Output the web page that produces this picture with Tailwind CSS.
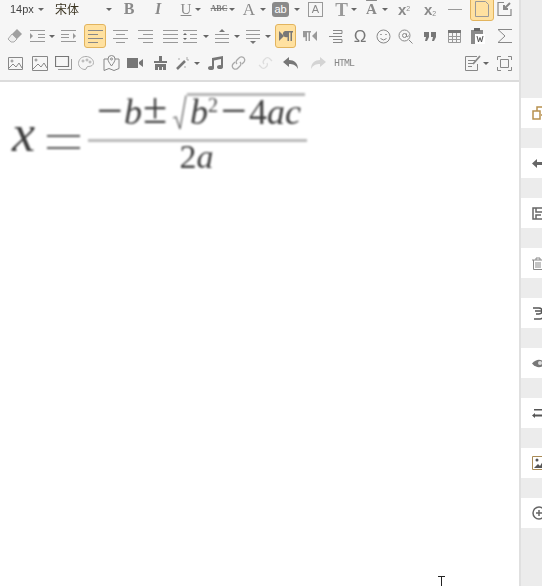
<!DOCTYPE html>
<html lang="en">
<head>
<meta charset="UTF-8">
<title>Editor formula</title>
<script src="https://cdn.jsdelivr.net/npm/@tailwindcss/browser@4"></script>
</head>
<body class="bg-white overflow-hidden">
<div class="relative flex w-[542px] h-[586px] overflow-hidden font-['Liberation_Sans',sans-serif]">
  <!-- editor column -->
  <div class="w-[519px] shrink-0 flex flex-col">
    <div class="h-[85px] shrink-0 bg-[#f6f6f6] border-b-2 border-[#dcdcdc] flex flex-col gap-[3px] -mt-[3px] pt-0 overflow-hidden">
      <!-- row 1 -->
      <div class="h-[24px] shrink-0 flex items-center text-[#888] blur-[0.3px]">
        <span class="ml-[10px] w-[27px] text-[11px] text-[#444]">14px</span>
        <span class="w-[8px] flex justify-center"><svg width="6" height="3" viewBox="0 0 6 3"><path d="M0 0h6L3 3z" fill="#666"/></svg></span>
        <span class="ml-[10px] w-[50px] text-[12px] text-[#3a3320] font-['Noto_Sans_CJK_SC',sans-serif]">宋体</span>
        <span class="w-[8px] flex justify-center"><svg width="6" height="3" viewBox="0 0 6 3"><path d="M0 0h6L3 3z" fill="#666"/></svg></span>
        <span class="ml-[6px] w-[20px] text-center text-[16px] leading-none font-bold font-['Liberation_Serif',serif] text-[#8a8a8a]">B</span>
        <span class="ml-[9px] w-[20px] text-center text-[16px] leading-none font-bold italic font-['Liberation_Serif',serif] text-[#8a8a8a]">I</span>
        <span class="ml-[10px] w-[16px] text-center text-[15px] leading-none underline font-['Liberation_Serif',serif] text-[#8a8a8a]">U</span>
        <span class="w-[8px] flex justify-center"><svg width="6" height="3" viewBox="0 0 6 3"><path d="M0 0h6L3 3z" fill="#666"/></svg></span>
        <span class="ml-[8px] w-[18px] text-center text-[8px] font-bold line-through font-['Liberation_Serif',serif] text-[#777]">ABC</span>
        <span class="w-[8px] flex justify-center"><svg width="6" height="3" viewBox="0 0 6 3"><path d="M0 0h6L3 3z" fill="#666"/></svg></span>
        <span class="ml-[3px] w-[20px] text-center text-[17px] leading-none font-['Liberation_Serif',serif] text-[#8a8a8a]">A</span>
        <span class="w-[8px] flex justify-center"><svg width="6" height="3" viewBox="0 0 6 3"><path d="M0 0h6L3 3z" fill="#666"/></svg></span>
        <span class="ml-[5px] w-[17px] h-[15px] rounded-[3px] bg-[#8a8a8a] text-white text-[11px] leading-[15px] text-center">ab</span>
        <span class="ml-[4px] w-[8px] flex justify-center"><svg width="6" height="3" viewBox="0 0 6 3"><path d="M0 0h6L3 3z" fill="#666"/></svg></span>
        <span class="ml-[7px] w-[15px] h-[15px] border border-[#999] text-[#888] text-[11px] leading-[13px] text-center">A</span>
        <span class="ml-[10px] w-[17px] text-center text-[19px] leading-none font-bold font-['Liberation_Serif',serif] text-[#999]">T</span>
        <span class="w-[8px] flex justify-center"><svg width="6" height="3" viewBox="0 0 6 3"><path d="M0 0h6L3 3z" fill="#666"/></svg></span>
        <span class="ml-[4px] w-[19px] text-center text-[15px] leading-none font-bold font-['Liberation_Serif',serif] text-[#8a8a8a] overline">A</span>
        <span class="w-[8px] flex justify-center"><svg width="6" height="3" viewBox="0 0 6 3"><path d="M0 0h6L3 3z" fill="#666"/></svg></span>
        <span class="ml-[5px] w-[20px] text-center text-[15px] leading-none font-bold text-[#8a8a8a]">x<sup class="text-[7px] font-normal">2</sup></span>
        <span class="ml-[6px] w-[20px] text-center text-[15px] leading-none font-bold text-[#8a8a8a]">x<sub class="text-[7px] font-normal">2</sub></span>
        <span class="ml-[5px] w-[20px] flex justify-center"><span class="w-[14px] h-px bg-[#999]"></span></span>
        <span class="ml-[5px] w-[24px] h-[24px] rounded-[3px] border border-[#e2b45e] bg-[#ffe1a0] flex items-center justify-center">
          <svg width="14" height="16" viewBox="0 0 14 16" fill="none" stroke="#999"><path d="M.5.5h10l3 3v12H.5z"/></svg>
        </span>
        <span class="w-[20px] flex justify-center">
          <svg width="15" height="16" viewBox="0 0 15 16" fill="none" stroke="#888" stroke-width="1.2"><path d="M7 1.500H1v13h13V8"/><path d="M13 2L7 8M7 4v4h4" stroke-width="2"/></svg>
        </span>
      </div>
      <!-- row 2 -->
      <div class="h-[24px] shrink-0 flex items-center blur-[0.3px]">
        <span class="ml-[5px] w-[20px] flex justify-center"><svg width="16" height="16" viewBox="0 0 16 16"><path d="M10 1l5 5-5 5-5-5z" fill="#a0a0a0"/><path d="M5 6l5 5-3 3H4l-3-3z" fill="#eee" stroke="#aaa"/></svg></span>
        <span class="ml-[3px] w-[19px] flex justify-center"><svg width="15" height="14" viewBox="0 0 15 14" fill="none" stroke="#999"><path d="M0 1.500h15M8 5.500h7M8 8.500h7M0 12.500h15"/><path d="M0 4l3 3-3 3z" fill="#999" stroke="none"/></svg></span>
        <span class="ml-[1px] w-[8px] flex justify-center"><svg width="6" height="3" viewBox="0 0 6 3"><path d="M0 0h6L3 3z" fill="#666"/></svg></span>
        <span class="ml-[3px] w-[20px] flex justify-center"><svg width="16" height="14" viewBox="0 0 16 14" fill="none" stroke="#999"><path d="M0 1.500h15M0 5.500h8M0 8.500h8M0 12.500h15"/><path d="M12 4l3 3-3 3z" fill="#999" stroke="none"/></svg></span>
        <span class="ml-[5px] w-[22px] h-[24px] rounded-[3px] border border-[#e2b45e] bg-[#ffe1a0] flex items-center justify-center"><svg width="15" height="13" viewBox="0 0 15 13" fill="none" stroke="#888"><path d="M0 .5h15M0 4.500h10M0 8.500h15M0 12.500h10"/></svg></span>
        <span class="ml-[4px] w-[20px] flex justify-center"><svg width="15" height="13" viewBox="0 0 15 13" fill="none" stroke="#999"><path d="M0 .5h15M3 4.500h9M0 8.500h15M3 12.500h9"/></svg></span>
        <span class="ml-[5px] w-[20px] flex justify-center"><svg width="15" height="13" viewBox="0 0 15 13" fill="none" stroke="#999"><path d="M0 .5h15M5 4.500h10M0 8.500h15M5 12.500h10"/></svg></span>
        <span class="ml-[5px] w-[20px] flex justify-center"><svg width="15" height="13" viewBox="0 0 15 13" fill="none" stroke="#999"><path d="M0 .5h15M0 4.500h15M0 8.500h15M0 12.500h15"/></svg></span>
        <span class="w-[20px] flex justify-center"><svg width="14" height="13" viewBox="0 0 14 13" fill="none" stroke="#999"><path d="M0 .5h14M7 4.500h7M7 8.500h7M0 12.500h14"/><path d="M0 5l2-2 2 2zM0 8l2 2 2-2z" fill="#666" stroke="none"/></svg></span>
        <span class="ml-[2px] w-[8px] flex justify-center"><svg width="6" height="3" viewBox="0 0 6 3"><path d="M0 0h6L3 3z" fill="#666"/></svg></span>
        <span class="ml-[2px] w-[20px] flex justify-center"><svg width="14" height="15" viewBox="0 0 14 15" fill="none" stroke="#999"><path d="M4 3l3-3 3 3z" fill="#777" stroke="none"/><path d="M0 5.500h14M0 9.500h14M0 13.500h14"/></svg></span>
        <span class="ml-[1px] w-[8px] flex justify-center"><svg width="6" height="3" viewBox="0 0 6 3"><path d="M0 0h6L3 3z" fill="#666"/></svg></span>
        <span class="ml-[2px] w-[20px] flex justify-center"><svg width="14" height="15" viewBox="0 0 14 15" fill="none" stroke="#999"><path d="M0 1.500h14M0 5.500h14M0 9.500h14"/><path d="M4 12l3 3 3-3z" fill="#777" stroke="none"/></svg></span>
        <span class="ml-[1px] w-[8px] flex justify-center"><svg width="6" height="3" viewBox="0 0 6 3"><path d="M0 0h6L3 3z" fill="#666"/></svg></span>
        <span class="ml-[3px] w-[21px] h-[24px] rounded-[3px] border border-[#e2b45e] bg-[#ffe1a0] flex items-center justify-center"><svg width="14" height="12" viewBox="0 0 14 12" fill="#777"><path d="M0 1l5 5-5 5z"/><path d="M6 1h8v1.500h-1V11h-1.500V2.500H10V11H8.500V7A3 3 0 0 1 6 1z"/></svg></span>
        <span class="ml-[4px] w-[20px] flex justify-center"><svg width="14" height="12" viewBox="0 0 14 12" fill="#999"><path d="M14 1L9 6l5 5z"/><path d="M0 1h8v1.500H7V11H5.500V2.500H4V11H2.500V7A3 3 0 0 1 0 1z"/></svg></span>
        <span class="ml-[5px] w-[20px] flex justify-center"><svg width="15" height="15" viewBox="0 0 15 15" fill="none" stroke="#888"><path d="M5 1.500h9v3H5M1 7.500h13M5 10.500h9v3H5"/></svg></span>
        <span class="ml-[5px] w-[20px] text-center text-[17px] leading-none text-[#777] font-['Liberation_Sans',sans-serif]">Ω</span>
        <span class="ml-[3px] w-[20px] flex justify-center"><svg width="15" height="15" viewBox="0 0 15 15" fill="none" stroke="#888"><circle cx="7.500" cy="7.500" r="6.500"/><path d="M4.500 9.500q3 3 6 0"/><path d="M5 5v1M10 5v1" stroke-width="1.500"/></svg></span>
        <span class="ml-[2px] w-[20px] flex justify-center"><svg width="15" height="15" viewBox="0 0 15 15" fill="none" stroke="#888"><circle cx="6.500" cy="6.500" r="5.500"/><circle cx="6.500" cy="6.500" r="2"/><path d="M8.500 4.500v3q1.500 1 2-1M11 11l3.500 3.500" /></svg></span>
        <span class="ml-[5px] w-[20px] flex justify-center"><svg width="12" height="9" viewBox="0 0 12 9" fill="#777"><path d="M0 0h5v5L3 9H1l1-4H0zM7 0h5v5l-2 4H8l1-4H7z"/></svg></span>
        <span class="ml-[4px] w-[20px] flex justify-center"><svg width="13" height="13" viewBox="0 0 13 13" fill="none" stroke="#999"><path d="M0 0h13v3H0z" fill="#777" stroke="none"/><path d="M.5 3v9.500h12V3M.5 6.500h12M.5 9.500h12M4.500 3v9M8.500 3v9"/></svg></span>
        <span class="ml-[4px] w-[20px] flex justify-center"><svg width="14" height="16" viewBox="0 0 14 16"><path d="M0 2h12v14H0z" fill="#8a8a8a"/><path d="M3 0h6v3H3z" fill="#666"/><path d="M4 6h10v10H4z" fill="#fff"/><path d="M6 8l1.500 6L9 9.500 10.500 14 12 8" fill="none" stroke="#555"/></svg></span>
        <span class="ml-[6px] w-[20px] flex justify-center"><svg width="15" height="14" viewBox="0 0 15 14" fill="none" stroke="#888"><path d="M15 .5H1L8 7l-7 6.500h14"/></svg></span>
      </div>
      <!-- row 3 -->
      <div class="h-[24px] shrink-0 flex items-center blur-[0.3px]">
        <span class="ml-[5px] w-[20px] flex justify-center"><svg width="15" height="13" viewBox="0 0 15 13" fill="none" stroke="#888"><path d="M.5.5h14v12H.5z"/><path d="M1 11l4-4 3 3 3-4 3 5"/><circle cx="4" cy="4" r="1"/></svg></span>
        <span class="ml-[5px] w-[20px] flex justify-center"><svg width="16" height="15" viewBox="0 0 16 15" fill="none" stroke="#888"><path d="M.5.5h15v14H.5z"/><path d="M1 13l5-5 3 3 3-4 3 5"/><circle cx="4" cy="4" r="1"/></svg></span>
        <span class="ml-[3px] w-[20px] flex justify-center"><svg width="17" height="14" viewBox="0 0 17 14" fill="none" stroke="#777"><path d="M.5.5h13v10H.5z" stroke-width="1.200"/><path d="M3 13.500h13.500V3" stroke="#999"/></svg></span>
        <span class="ml-[3px] w-[20px] flex justify-center"><svg width="16" height="14" viewBox="0 0 16 14" fill="none" stroke="#aaa"><path d="M8 .5C3 .5.500 4 .500 7.500S4 13.500 7 13.500c2 0 1-3 3-3 3 0 5.500-1 5.500-4S12 .5 8 .5z"/><circle cx="5" cy="5" r="1"/><circle cx="9" cy="4" r="1"/><circle cx="12" cy="6" r="1"/></svg></span>
        <span class="ml-[5px] w-[20px] flex justify-center"><svg width="17" height="16" viewBox="0 0 17 16" fill="none" stroke="#888"><path d="M5 4H1v11.500l5-2 5 2 5-2V4h-4"/><path d="M8.500 11C6 7.500 5 6 5 4a3.500 3.500 0 0 1 7 0c0 2-1 3.500-3.500 7z"/><circle cx="8.500" cy="4" r="1"/></svg></span>
        <span class="ml-[4px] w-[20px] flex justify-center"><svg width="16" height="10" viewBox="0 0 16 10" fill="#777"><path d="M0 0h11v10H0zM12 4l4-3v8l-4-3z"/></svg></span>
        <span class="ml-[5px] w-[20px] flex justify-center"><svg width="13" height="14" viewBox="0 0 13 14" fill="#777"><path d="M5 0h3v5h5v2H0V5h5zM1 8h11v6H9v-3H8v3H5v-3H4v3H1z"/></svg></span>
        <span class="ml-[3px] w-[20px] flex justify-center"><svg width="14" height="14" viewBox="0 0 14 14" fill="none" stroke="#777"><path d="M1 13L9 5" stroke-width="2.500"/><path d="M11 1v3M13 4h-2M3 2v2M9 10v2" stroke="#aaa"/></svg></span>
        <span class="w-[8px] flex justify-center"><svg width="6" height="3" viewBox="0 0 6 3"><path d="M0 0h6L3 3z" fill="#666"/></svg></span>
        <span class="ml-[4px] w-[20px] flex justify-center"><svg width="15" height="14" viewBox="0 0 15 14" fill="#777"><path d="M4 2l11-2v11h-2V3L6 4.500V12H4z"/><ellipse cx="3" cy="12" rx="3" ry="2"/><ellipse cx="12" cy="11" rx="3" ry="2"/></svg></span>
        <span class="ml-[3px] w-[20px] flex justify-center"><svg width="15" height="14" viewBox="0 0 15 14" fill="none" stroke="#aaa" stroke-width="1.300"><path d="M6 8a3 3 0 0 1 0-4l2-2a3 3 0 0 1 5 4l-2 2"/><path d="M9 6a3 3 0 0 1 0 4l-2 2a3 3 0 0 1-5-4l2-2"/></svg></span>
        <span class="ml-[7px] w-[20px] flex justify-center"><svg width="17" height="12" viewBox="0 0 17 12" fill="none" stroke="#ddd" stroke-width="1.300"><path d="M7 7a3 3 0 0 1 0-4l1-1a3 3 0 0 1 5 0l2 2"/><path d="M10 6a3 3 0 0 1 0 3l-1 1a3 3 0 0 1-5 0L2 8"/></svg></span>
        <span class="ml-[6px] w-[20px] flex justify-center"><svg width="16" height="12" viewBox="0 0 16 12" fill="#777"><path d="M6 0L0 5l6 5V7c4 0 7 1 9 5 0-6-4-9-9-9z"/></svg></span>
        <span class="ml-[7px] w-[20px] flex justify-center"><svg width="16" height="12" viewBox="0 0 16 12" fill="#d4d4d4"><path d="M10 0l6 5-6 5V7C6 7 3 8 1 12c0-6 4-9 9-9z"/></svg></span>
        <span class="ml-[6px] w-[20px] text-center text-[10px] tracking-[-1px] text-[#888] font-['Liberation_Mono',monospace]">HTML</span>
        <span class="ml-[109px] w-[20px] flex justify-center"><svg width="17" height="16" viewBox="0 0 17 16" fill="none" stroke="#888"><path d="M12 1.500H.5v14h12V9"/><path d="M3 5.500h7M3 8.500h5M3 11.500h4"/><path d="M8 9l7-8" stroke-width="1.800"/></svg></span>
        <span class="ml-[-1px] w-[8px] flex justify-center"><svg width="6" height="3" viewBox="0 0 6 3"><path d="M0 0h6L3 3z" fill="#666"/></svg></span>
        <span class="ml-[4px] w-[20px] flex justify-center"><svg width="15" height="15" viewBox="0 0 15 15" fill="none" stroke="#888"><path d="M.5 4V.5H4M11 .5h3.500V4M14.500 11v3.500H11M4 14.500H.5V11"/><path d="M3.500 3.500h8v8h-8z"/></svg></span>
      </div>
    </div>
    <!-- formula -->
    <div class="flex-1 pt-[12px] pl-[10px] blur-[0.8px] text-[#3c3c3c] font-['Liberation_Serif',serif]">
      <div class="flex items-center h-[80px]">
        <span class="italic text-[52px] leading-none mt-[-1px] w-[37px] pl-[2px]">x</span>
        <span class="w-[33px] h-[14px] mt-[16px] border-y-2 border-[#555]"></span>
        <div class="ml-[8px] w-[219px] flex flex-col items-stretch mt-[-2px]">
          <div class="h-[46px] flex items-end pl-[9px] text-[36px] leading-none pb-[9px] whitespace-nowrap">
            <span class="w-[27px] text-[46px] mb-[-4px]">−</span>
            <span class="italic w-[19px]">b</span>
            <span class="w-[29px] text-[44px] mb-[-1px]">±</span>
            <svg class="mb-[-2px]" width="15" height="38" viewBox="0 0 15 38" fill="none" stroke="#555"><path d="M1 24l3-1 4 12L14 1.500" stroke-width="1.200"/></svg>
            <span class="h-[37px] w-[118px] border-t-[3px] border-[#b5b5b5] flex items-end pl-[3px]"><span class="italic">b</span><span class="text-[20px] mb-[15px]">2</span><span class="ml-[3px] text-[46px] mb-[-4px]">−</span><span class="ml-[2px]">4<span class="italic">ac</span></span></span>
          </div>
          <div class="h-[3px] bg-[#b9b9b9]"></div>
          <div class="text-center text-[34px] leading-none mt-[-2px] pr-[2px]">2<span class="italic">a</span></div>
        </div>
      </div>
    </div>
  </div>
  <!-- side panel -->
  <div class="flex-1 bg-[#ececec] border-l-2 border-[#e0e0e0] flex flex-col gap-[20px] pt-[98px] pl-0">
    <div class="h-[30px] bg-white flex items-center pl-[11px]"><svg class="shrink-0" width="14" height="14" viewBox="0 0 14 14" fill="none" stroke="#b8914f" stroke-width="1.500"><path d="M5 5V1h5l3 3v5H9M1 5h7v8H1z"/></svg></div>
    <div class="h-[30px] bg-white flex items-center pl-[11px]"><svg class="shrink-0" width="12" height="9" viewBox="0 0 12 9" fill="#666"><path d="M5 0L0 4.500 5 9V6h7V3H5z"/></svg></div>
    <div class="h-[30px] bg-white flex items-center pl-[11px]"><svg class="shrink-0" width="13" height="13" viewBox="0 0 13 13" fill="none" stroke="#666" stroke-width="1.500"><path d="M1 1h11v11H1zM4 1v4h7M4 12V8h5"/></svg></div>
    <div class="h-[30px] bg-white flex items-center pl-[11px]"><svg class="shrink-0" width="12" height="13" viewBox="0 0 12 13" fill="none" stroke="#888"><path d="M0 3h12M4 3V1h4v2M1.500 3v9.500h9V3M4 5v6M6 5v6M8 5v6"/></svg></div>
    <div class="h-[30px] bg-white flex items-center pl-[11px]"><svg class="shrink-0" width="12" height="13" viewBox="0 0 12 13" fill="none" stroke="#555" stroke-width="1.500"><path d="M1 1h6a3 3 0 0 1 0 6H4M3 4h8M2 12h6a3 3 0 0 0 3-3"/></svg></div>
    <div class="h-[30px] bg-white flex items-center pl-[11px]"><svg class="shrink-0" width="14" height="11" viewBox="0 0 14 11"><path d="M0 5.500Q7-2 14 5.500 7 13 0 5.500z" fill="#777"/><circle cx="8" cy="5" r="2" fill="#ddd"/></svg></div>
    <div class="h-[30px] bg-white flex items-center pl-[11px]"><svg class="shrink-0" width="14" height="10" viewBox="0 0 14 10" fill="#555"><path d="M2 1h12v1.500H2zM3 5L0 7.500 3 10V8.500h11V6.500H3z"/></svg></div>
    <div class="h-[30px] bg-white flex items-center pl-[11px]"><svg class="shrink-0" width="14" height="14" viewBox="0 0 14 14" fill="none" stroke="#a98a55"><path d="M.5.5h13v13H.5z"/><path d="M2 12l4-4 2 2 3-5 2 7z" fill="#555" stroke="none"/><circle cx="5" cy="4" r="1.500" fill="#555" stroke="none"/></svg></div>
    <div class="h-[30px] bg-white flex items-center pl-[11px]"><svg class="shrink-0" width="14" height="14" viewBox="0 0 14 14" fill="none" stroke="#666" stroke-width="1.500"><circle cx="7" cy="7" r="6"/><path d="M7 4v6M4 7h6"/></svg></div>
  </div>
  <!-- mouse cursor -->
  <div class="absolute left-[438px] top-[576px] w-[7px] h-[10px] flex flex-col items-center">
    <span class="w-[7px] h-px bg-[#222]"></span>
    <span class="w-px h-[9px] bg-[#222]"></span>
  </div>
</div>
</body>
</html>
